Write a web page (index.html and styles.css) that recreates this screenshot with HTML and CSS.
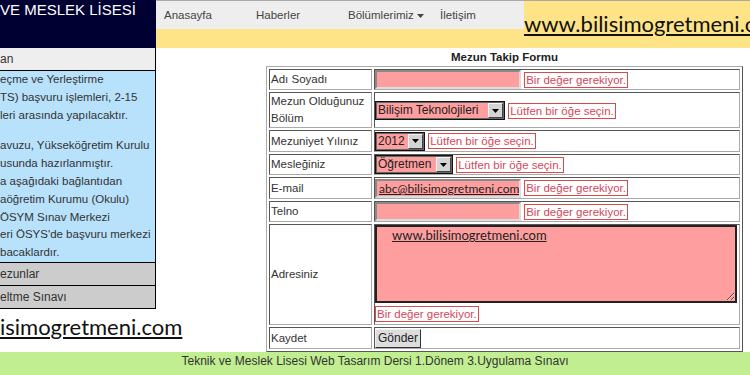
FILE: index.html
```html
<!DOCTYPE html>
<html lang="tr">
<head>
<meta charset="UTF-8">
<meta name="viewport" content="width=device-width, initial-scale=1.0">
<title>Mezun Takip Formu</title>
<link rel="stylesheet" href="styles.css">
</head>
<body>

<div class="page">
  <aside class="side">
    <div class="brand">VE MESLEK LİSESİ</div>
    <div class="side-head">an</div>
    <div class="info">
      <p>eçme ve Yerleştirme<br>TS) başvuru işlemleri, 2-15<br>leri arasında yapılacaktır.</p>
      <p>avuzu, Yükseköğretim Kurulu<br>usunda hazırlanmıştır.<br>a aşağıdaki bağlantıdan<br>aöğretim Kurumu (Okulu)<br>ÖSYM Sınav Merkezi<br>eri ÖSYS'de başvuru merkezi<br>bacaklardır.</p>
    </div>
    <div class="side-link">ezunlar</div>
    <div class="side-link">eltme Sınavı</div>
    <div class="mark side-mark">isimogretmeni.com</div>
  </aside>

  <main class="main">
    <div class="topbar">
      <nav class="nav">
        <a href="#">Anasayfa</a>
        <a href="#">Haberler</a>
        <a href="#">Bölümlerimiz <svg class="caret" width="7" height="4" viewBox="0 0 7 4"><path d="M0 0h7L3.5 4z"/></svg></a>
        <a href="#">İletişim</a>
      </nav>
      <div class="mark top-mark">www.bilisimogretmeni.com</div>
    </div>
    <div class="band"></div>

    <form class="form-wrap" onsubmit="return false;">
      <table class="form">
        <caption>Mezun Takip Formu</caption>
        <tr>
          <td class="lbl">Adı Soyadı</td>
          <td class="val"><input class="field" type="text"> <span class="err">Bir değer gerekiyor.</span></td>
        </tr>
        <tr>
          <td class="lbl">Mezun Olduğunuz<br>Bölüm</td>
          <td class="val"><span class="pick pick-wide"><select><option>Bilişim Teknolojileri</option></select><span class="arrow"><svg width="7" height="4" viewBox="0 0 7 4"><path d="M0 0h7L3.5 4z"/></svg></span></span> <span class="err">Lütfen bir öğe seçin.</span></td>
        </tr>
        <tr>
          <td class="lbl">Mezuniyet Yılınız</td>
          <td class="val"><span class="pick pick-year"><select><option>2012</option></select><span class="arrow"><svg width="7" height="4" viewBox="0 0 7 4"><path d="M0 0h7L3.5 4z"/></svg></span></span> <span class="err">Lütfen bir öğe seçin.</span></td>
        </tr>
        <tr>
          <td class="lbl">Mesleğiniz</td>
          <td class="val"><span class="pick pick-job"><select><option>Öğretmen</option></select><span class="arrow"><svg width="7" height="4" viewBox="0 0 7 4"><path d="M0 0h7L3.5 4z"/></svg></span></span> <span class="err">Lütfen bir öğe seçin.</span></td>
        </tr>
        <tr>
          <td class="lbl">E-mail</td>
          <td class="val"><input class="field mail" type="text" value="abc@bilisimogretmeni.com"> <span class="err">Bir değer gerekiyor.</span></td>
        </tr>
        <tr>
          <td class="lbl">Telno</td>
          <td class="val"><input class="field" type="text"> <span class="err">Bir değer gerekiyor.</span></td>
        </tr>
        <tr>
          <td class="lbl">Adresiniz</td>
          <td class="val val-area">
            <textarea class="area">www.bilisimogretmeni.com</textarea>
            <div class="err-line"><span class="err">Bir değer gerekiyor.</span></div>
          </td>
        </tr>
        <tr>
          <td class="lbl">Kaydet</td>
          <td class="val"><button class="send" type="submit">Gönder</button></td>
        </tr>
      </table>
    </form>
  </main>
</div>

<footer class="foot">Teknik ve Meslek Lisesi Web Tasarım Dersi 1.Dönem 3.Uygulama Sınavı</footer>

</body>
</html>
```

FILE: styles.css
```css
html, body {
    overflow: hidden;
}

body {
    margin: 0;
    font-family: "Liberation Sans", Arial, sans-serif;
    font-size: 11.5px;
    color: #333;
}

.page {
    display: grid;
    grid-template-columns: 156px 1fr;
}

/* left column */
.side {
    white-space: nowrap;
}

.brand {
    height: 48px;
    box-sizing: border-box;
    padding-top: 1px;
    background: #000033;
    color: #fff;
    font-size: 15px;
    line-height: 18px;
}

.side-head,
.side-link {
    height: 23px;
    box-sizing: border-box;
    line-height: 22px;
    border-right: 1px solid #000;
    border-bottom: 1px solid #000;
    font-size: 12px;
}

.side-head {
    background: #eee;
}

.side-link {
    background: #ccc;
}

.info {
    height: 192px;
    box-sizing: border-box;
    background: #b8e1fc;
    border-right: 1px solid #000;
    border-bottom: 1px solid #000;
    line-height: 17.8px;
    font-size: 11.5px;
}

.info p {
    margin: 0 0 13px;
}

.mark {
    font-family: Lato, "Open Sans", sans-serif;
    font-size: 22px;
    color: #111;
    text-decoration: underline;
    white-space: nowrap;
}

.side-mark {
    margin-top: 3px;
    line-height: 30px;
}

/* top bar */
.topbar {
    display: flex;
    height: 29px;
    box-sizing: border-box;
    border-top: 1px solid #aaa;
}

.nav {
    flex: 1;
    display: flex;
    background: #eee;
}

.nav a {
    width: 92px;
    box-sizing: border-box;
    padding-left: 8px;
    line-height: 28px;
    color: #444;
    text-decoration: none;
    white-space: nowrap;
}

.caret {
    fill: #444;
    vertical-align: middle;
}

.top-mark {
    width: 228px;
    height: 28px;
    padding-top: 11px;
    box-sizing: border-box;
    line-height: 24px;
    background: #fee486;
}

.band {
    height: 19px;
    background: #fee486;
}

/* form */
.form-wrap {
    margin: 0 0 0 110px;
}

table.form {
    width: 477px;
    border: 1px outset #aaa;
    border-spacing: 2px;
}

table.form caption {
    height: 18px;
    line-height: 18px;
    font-weight: bold;
    color: #222;
}

table.form td {
    border: 1px inset #aaa;
    padding: 0 1px 0 0;
    vertical-align: middle;
}

table.form td.lbl {
    width: 98px;
    padding: 0 2px 0 1px;
    line-height: 17px;
    white-space: nowrap;
}

table.form td.val {
    line-height: 19px;
    white-space: nowrap;
}

.field {
    width: 146px;
    height: 19px;
    box-sizing: border-box;
    margin: 0;
    padding: 0 3px;
    border: 2px inset #ddd;
    background: #ff9e9e;
    font-family: Lato, "Open Sans", sans-serif;
    font-size: 13px;
    color: #222;
    vertical-align: middle;
}

.mail {
    text-decoration: underline;
    padding: 0 0 0 2px;
    font-size: 12px;
}

.err {
    display: inline-block;
    padding: 0 1px;
    border: 1px solid #d94a4a;
    background: #fff;
    color: #d4475a;
    line-height: 14px;
    vertical-align: middle;
}

.pick {
    display: inline-flex;
    height: 19px;
    box-sizing: border-box;
    border: 1px solid #111;
    box-shadow: inset 0 0 0 1px #666;
    background: #ff9e9e;
    vertical-align: middle;
}

.pick-wide { width: 130px; }
.pick-year { width: 50px; }
.pick-job { width: 78px; }

.pick select {
    appearance: none;
    flex: 1;
    min-width: 0;
    height: 17px;
    margin: 0;
    padding: 0 0 0 2px;
    border: 0;
    background: transparent;
    font-family: "Liberation Sans", Arial, sans-serif;
    font-size: 12px;
    line-height: 17px;
    color: #222;
}

.pick .arrow {
    display: flex;
    align-items: center;
    justify-content: center;
    width: 15px;
    box-sizing: border-box;
    margin: 1px;
    background: #d4d4d4;
    border: 1px solid;
    border-color: #f4f4f4 #444 #444 #f4f4f4;
}

.val-area {
    padding-bottom: 1px;
}

.area {
    display: block;
    width: 362px;
    height: 78px;
    box-sizing: border-box;
    margin: 0;
    padding: 0 15px;
    border: 2px solid #222;
    background: #ff9e9e;
    font-family: Lato, "Open Sans", sans-serif;
    font-size: 13px;
    color: #222;
    text-decoration: underline;
}

.err-line {
    height: 21px;
    line-height: 21px;
}

.send {
    height: 19px;
    margin: 0;
    padding: 0 2px;
    border: 1px solid;
    border-color: #f0f0f0 #333 #333 #f0f0f0;
    background: #ddd;
    font-family: "Liberation Sans", Arial, sans-serif;
    font-size: 12px;
    color: #222;
    vertical-align: middle;
}

/* footer */
.foot {
    height: 25px;
    background: #c0ee90;
    text-align: center;
    line-height: 18px;
    font-size: 12px;
    color: #333;
}
```
